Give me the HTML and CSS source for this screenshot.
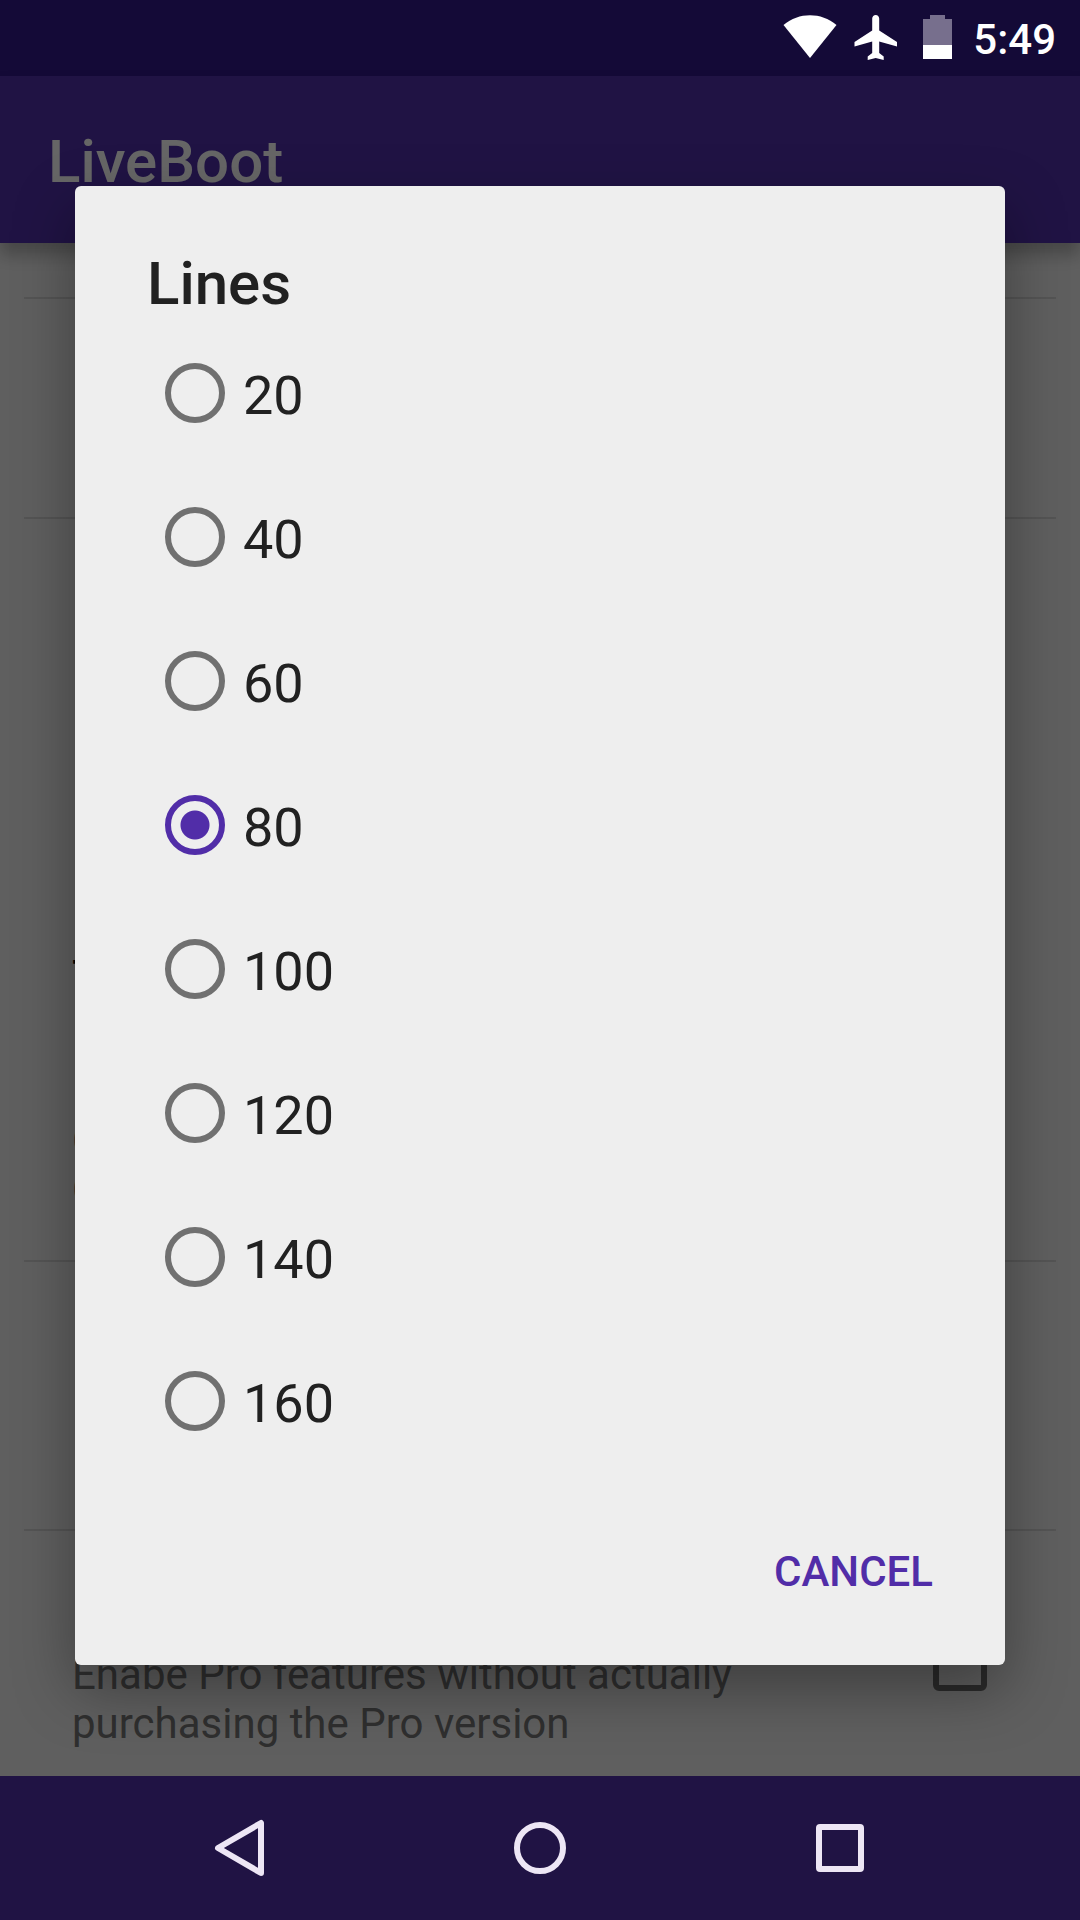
FILE: index.html
```html
<!DOCTYPE html>
<html lang="en">
<head>
    <meta charset="UTF-8">
    <meta name="viewport" content="width=device-width, initial-scale=1.0">
    <title>LiveBoot</title>
    <link rel="stylesheet" href="styles.css">
</head>
<body>
    <div class="status-bar">
        <svg class="icon-wifi" width="54" height="44" viewBox="0 0 54 44">
            <path d="M0.5 10 C16 -3 38 -3 53.500 10 L27 43 Z" fill="#fff"/>
        </svg>
        <svg class="icon-airplane" width="52" height="46" viewBox="0 0 52 46">
            <path d="M44 31.500 V27 L26.200 15.500 V3.500 C26.200 1.600 24.600 0 22.700 0 S19.200 1.600 19.200 3.500 V15.500 L1.500 27 V31.500 L19.200 26.500 V38 L14.700 41.500 V45 L22.700 43 L30.700 45 V41.500 L26.200 38 V26.500 Z" fill="#fff"/>
        </svg>
        <svg class="icon-battery" width="36" height="44" viewBox="0 0 36 44">
            <path d="M2 4 H9 V0 H24 V4 H31 V30 H2 Z" fill="#776f8d"/>
            <path d="M2 30 H31 V44 H2 Z" fill="#fff"/>
        </svg>
        <span class="clock">5:49</span>
    </div>

    <div class="screen">
        <div class="app">
            <header class="app-bar">
                <h1>LiveBoot</h1>
            </header>
            <main class="preferences">
                <div class="pref pref-cut"></div>
                <div class="pref pref-short"></div>
                <div class="pref pref-tall">
                    <div class="pref-title">T</div>
                    <div class="pref-summary">O<br>O</div>
                </div>
                <div class="pref pref-medium"></div>
                <div class="pref pref-check">
                    <label class="pref-summary" for="enablePro">Enabe Pro features without actually purchasing the Pro version</label>
                    <input type="checkbox" id="enablePro" class="checkbox">
                </div>
            </main>
        </div>

        <div class="scrim">
            <form class="dialog" role="dialog" aria-labelledby="dialogTitle">
                <h2 class="dialog-title" id="dialogTitle">Lines</h2>
                <div class="options">
                    <label class="option"><input type="radio" name="lines" value="20"><span>20</span></label>
                    <label class="option"><input type="radio" name="lines" value="40"><span>40</span></label>
                    <label class="option"><input type="radio" name="lines" value="60"><span>60</span></label>
                    <label class="option"><input type="radio" name="lines" value="80" checked><span>80</span></label>
                    <label class="option"><input type="radio" name="lines" value="100"><span>100</span></label>
                    <label class="option"><input type="radio" name="lines" value="120"><span>120</span></label>
                    <label class="option"><input type="radio" name="lines" value="140"><span>140</span></label>
                    <label class="option"><input type="radio" name="lines" value="160"><span>160</span></label>
                </div>
                <div class="dialog-actions">
                    <button type="button" class="btn">CANCEL</button>
                </div>
            </form>
        </div>
    </div>

    <nav class="nav-bar">
        <button type="button" aria-label="Back">
            <svg width="60" height="60" viewBox="0 0 60 60">
                <path d="M51 5 V55 L8 30 Z"/>
            </svg>
        </button>
        <button type="button" aria-label="Home">
            <svg width="60" height="60" viewBox="0 0 60 60">
                <circle cx="30" cy="30" r="23"/>
            </svg>
        </button>
        <button type="button" aria-label="Recent apps">
            <svg width="60" height="60" viewBox="0 0 60 60">
                <rect x="9" y="9" width="42" height="42" rx="1"/>
            </svg>
        </button>
    </nav>
</body>
</html>
```
FILE: styles.css
```css
* {
    margin: 0;
    padding: 0;
    box-sizing: border-box;
    font-family: Roboto, sans-serif;
}

body {
    display: flex;
    flex-direction: column;
    min-height: 100vh;
    background-color: #201344;
}

/* status bar */
.status-bar {
    display: flex;
    align-items: flex-start;
    justify-content: flex-end;
    gap: 16px;
    height: 76px;
    padding: 15px 24px 0;
    background-color: #140a37;
}

.clock {
    color: #fff;
    font-size: 42px;
    font-weight: 500;
    line-height: 50px;
}

/* app behind the dialog */
.screen {
    position: relative;
    display: flex;
    flex-direction: column;
    flex: 1;
}

.app {
    display: flex;
    flex-direction: column;
    flex: 1;
    background-color: #eee;
}

.app-bar {
    display: flex;
    align-items: center;
    height: 167px;
    padding: 4px 48px 0;
    background-color: #5030aa;
    box-shadow: 0 12px 16px rgba(0, 0, 0, 0.25);
}

.app-bar h1 {
    color: #fff;
    font-size: 60px;
    font-weight: 500;
}

.preferences {
    flex: 1;
    padding: 0 24px;
}

.pref {
    padding: 0 48px;
    border-bottom: 2px solid #d2d2d2;
}

.pref-cut {
    height: 56px;
}

.pref-short {
    height: 220px;
}

.pref-medium {
    height: 269px;
}

.pref-tall {
    display: flex;
    flex-direction: column;
    justify-content: flex-end;
    gap: 110px;
    height: 743px;
    padding-bottom: 46px;
}

.pref-title {
    color: #000;
    font-size: 48px;
    line-height: 56px;
}

.pref-summary {
    color: #757575;
    font-size: 42px;
    line-height: 49px;
}

.pref-check {
    display: flex;
    align-items: flex-start;
    justify-content: space-between;
    padding: 119px 69px 28px 48px;
    border-bottom: none;
}

.pref-check .pref-summary {
    width: 80%;
}

.checkbox {
    appearance: none;
    width: 54px;
    height: 54px;
    margin-top: -13px;
    border: 6px solid #6c6c6c;
    border-radius: 6px;
}

/* dialog */
.scrim {
    position: absolute;
    inset: 0;
    display: flex;
    align-items: center;
    padding: 0 75px 1px;
    background-color: rgba(0, 0, 0, 0.6);
}

.dialog {
    flex: 1;
    padding-top: 60px;
    background-color: #eee;
    border-radius: 6px;
    box-shadow: 0 24px 60px rgba(0, 0, 0, 0.35);
}

.dialog-title {
    padding: 0 72px;
    color: #212121;
    font-size: 60px;
    font-weight: 500;
    line-height: 75px;
}

.option {
    display: flex;
    align-items: center;
    gap: 18px;
    height: 144px;
    padding: 0 90px;
    color: #212121;
    font-size: 54px;
    cursor: pointer;
}

.option span {
    padding-top: 4px;
}

.option input {
    appearance: none;
    width: 60px;
    height: 60px;
    border: 6px solid #707070;
    border-radius: 50%;
}

.option input:checked {
    border-color: #512da8;
    background: radial-gradient(circle, #512da8 14px, transparent 15px);
}

.dialog-actions {
    display: flex;
    align-items: center;
    justify-content: flex-end;
    height: 192px;
    padding: 4px 72px 0;
}

.btn {
    border: none;
    background: none;
    color: #512da8;
    font-size: 42px;
    font-weight: 500;
    cursor: pointer;
}

/* navigation bar */
.nav-bar {
    display: flex;
    height: 144px;
    padding: 0 90px;
    background-color: #201344;
}

.nav-bar button {
    display: flex;
    align-items: center;
    justify-content: center;
    flex: 1;
    border: none;
    background: none;
    cursor: pointer;
}

.nav-bar svg {
    fill: none;
    stroke: #ede6f5;
    stroke-width: 6;
    stroke-linejoin: round;
}
```
